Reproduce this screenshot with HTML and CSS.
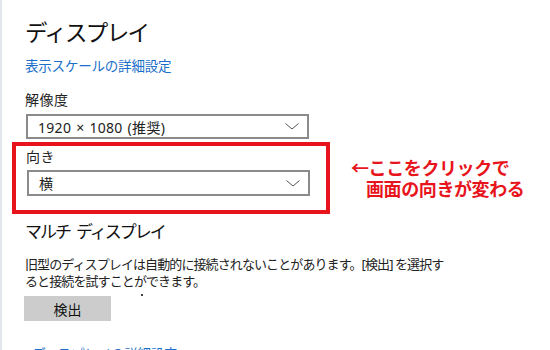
FILE: index.html
```html
<!DOCTYPE html>
<html lang="ja">
<head>
<meta charset="utf-8">
<link rel="stylesheet" href="styles.css">
</head>
<body>
<div class="page">
  <h1 class="title">ディスプレイ</h1>
  <a class="link" href="#">表示スケールの詳細設定</a>
  <div class="label first">解像度</div>
  <div class="select">
    <span class="val">1920 × 1080 (推奨)</span>
    <svg class="chev" width="14" height="7" viewBox="0 0 14 7"><polyline points="0.5,0.5 7,6 13.5,0.5" fill="none" stroke="#555" stroke-width="1"/></svg>
  </div>
  <div class="row">
    <div class="highlight">
      <div class="label">向き</div>
      <div class="select second">
        <span>横</span>
        <svg class="chev" width="14" height="7" viewBox="0 0 14 7"><polyline points="0.5,0.5 7,6 13.5,0.5" fill="none" stroke="#555" stroke-width="1"/></svg>
      </div>
    </div>
    <div class="note">
      <div>←ここをクリックで</div>
      <div class="indent">画面の向きが変わる</div>
    </div>
  </div>
  <h2 class="subtitle">マルチ<span class="gap"></span>ディスプレイ</h2>
  <p class="desc">旧型のディスプレイは自動的に接続されないことがあります。[検出] を選択す<br>ると接続を試すことができます。</p>
  <div class="btnrow">
    <button class="btn">検出</button>
    <span class="dot"></span>
  </div>
  <a class="link bottom" href="#">ディスプレイの詳細設定</a>
</div>
</body>
</html>
```

FILE: styles.css
```css
* { box-sizing: border-box; }
html, body {
  margin: 0;
  padding: 0;
  background: #fff;
  width: 550px;
  height: 350px;
  overflow: hidden;
}
body {
  font-family: "Noto Sans", "Noto Sans CJK JP", sans-serif;
  color: #1a1a1a;
}
.page {
  position: relative;
  border-left: 2px solid #e3e7ec;
  height: 350px;
  overflow: hidden;
  padding-left: 23px;
  padding-top: 18px;
}
.title {
  margin: 0;
  font-weight: 400;
  font-size: 22.5px;
  letter-spacing: -1.7px;
  line-height: 30px;
  color: #111;
}
.link {
  display: block;
  margin-top: 8px;
  font-size: 13.5px;
  line-height: 20px;
  color: #1a6fc9;
  text-decoration: none;
  letter-spacing: -0.2px;
}
.label {
  font-size: 14px;
  line-height: 20px;
  letter-spacing: 0.5px;
  color: #222;
}
.label.first { margin-top: 14px; }
.select {
  margin-top: 4px;
  margin-left: 1px;
  width: 283px;
  height: 25px;
  border: 2px solid #8a8a8a;
  display: flex;
  align-items: center;
  justify-content: space-between;
  padding: 0 8px 0 10px;
  font-size: 14px;
  color: #222;
}
.val { letter-spacing: 0.3px; word-spacing: 1px; }
.select.second { margin-top: 3px; height: 26px; }
.chev { display: block; }
.row {
  display: flex;
  align-items: flex-start;
  margin-top: 3px;
  margin-left: -13px;
}
.highlight {
  width: 318px;
  border: 4px solid #e8141c;
  padding: 1px 0 14px 10px;
}
.note {
  margin-left: 21px;
  margin-top: 16px;
  color: #e8141c;
  font-weight: 700;
  font-size: 18px;
  line-height: 21px;
  letter-spacing: -0.4px;
}
.note .indent { padding-left: 15px; }
.subtitle {
  margin: 6px 0 0;
  font-weight: 400;
  font-size: 17px;
  letter-spacing: -2px;
  line-height: 24px;
  color: #111;
}
.gap { display: inline-block; width: 6px; }
.desc {
  margin: 12px 0 0;
  font-size: 13px;
  letter-spacing: -0.9px;
  line-height: 17px;
  color: #222;
}
.btnrow {
  display: flex;
  align-items: flex-start;
  margin-top: 6px;
}
.btn {
  width: 87px;
  height: 25px;
  margin-left: -1px;
  border: none;
  background: #cccccc;
  font-family: inherit;
  font-size: 14px;
  color: #111;
  padding: 0;
}
.dot {
  width: 2px;
  height: 2px;
  background: #444;
  margin-left: 30px;
  margin-top: -2px;
}
.link.bottom {
  margin-top: 23px;
  margin-left: 7px;
}
```
